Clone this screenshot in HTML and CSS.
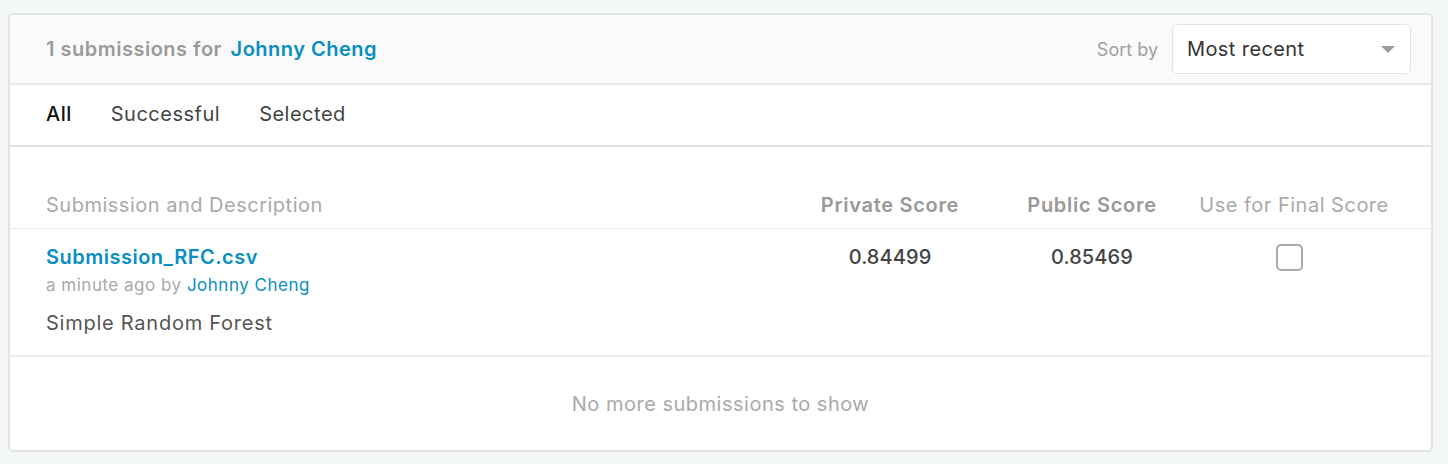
FILE: index.html
```html
<!DOCTYPE html>
<html>
<head>
<meta charset="utf-8">
<link rel="stylesheet" href="styles.css">
</head>
<body>
<div class="card">
  <div class="card-header">
    <div class="title"><span class="count">1 submissions for</span> <a class="user" href="#">Johnny Cheng</a></div>
    <div class="sort">
      <span class="sort-label">Sort by</span>
      <div class="select"><span>Most recent</span><span class="caret"></span></div>
    </div>
  </div>
  <div class="tabs">
    <span class="tab active">All</span>
    <span class="tab">Successful</span>
    <span class="tab">Selected</span>
  </div>
  <div class="table">
    <div class="thead">
      <div class="col-desc">Submission and Description</div>
      <div class="col-score strong">Private Score</div>
      <div class="col-score strong">Public Score</div>
      <div class="col-score">Use for Final Score</div>
    </div>
    <div class="row">
      <div class="col-desc">
        <a class="file" href="#">Submission_RFC.csv</a>
        <div class="meta">a minute ago by <a href="#">Johnny Cheng</a></div>
        <div class="desc">Simple Random Forest</div>
      </div>
      <div class="col-score value">0.84499</div>
      <div class="col-score value">0.85469</div>
      <div class="col-score value"><span class="checkbox"></span></div>
    </div>
  </div>
  <div class="footer">No more submissions to show</div>
</div>
</body>
</html>
```
FILE: styles.css
```css
html, body { margin: 0; }
body {
  background: #f4f7f8;
  font-family: Inter, "Liberation Sans", sans-serif;
  letter-spacing: 0.5px;
  padding: 13px 15px 0 8px;
}
a { text-decoration: none; color: #0a8ec2; }
.card {
  background: #fff;
  border: 2px solid #e3e4e5;
  border-radius: 5px;
  overflow: hidden;
}
.card-header {
  background: #fafafa;
  height: 70px;
  box-sizing: border-box;
  border-bottom: 2px solid #e8e8e8;
  display: flex;
  align-items: center;
  justify-content: space-between;
  padding: 0 20px 0 36px;
}
.title { font-size: 20px; font-weight: 600; }
.count { color: #9a9a9a; }
.user { color: #0a8ec2; margin-left: 3px; }
.sort { display: flex; align-items: center; gap: 14px; }
.sort-label { color: #a0a0a0; font-size: 18px; letter-spacing: 0; }
.select {
  width: 239px; height: 50px; box-sizing: border-box;
  border: 1px solid #e4e4e4; border-radius: 5px; background: #fff;
  display: flex; align-items: center; justify-content: space-between;
  padding: 0 15px 0 14px;
  font-size: 20px; color: #333; letter-spacing: 0.4px;
}
.caret {
  width: 0; height: 0;
  border-left: 7px solid transparent; border-right: 7px solid transparent;
  border-top: 7px solid #999;
}
.tabs {
  height: 62px; box-sizing: border-box;
  border-bottom: 2px solid #e2e2e2;
  display: flex; align-items: center; gap: 39px;
  padding: 0 36px 3px; font-size: 20px; color: #444;
}
.tab.active { color: #111; font-weight: 500; }
.thead, .row { display: flex; padding: 0 36px; }
.thead {
  padding-top: 46px; padding-bottom: 11px;
  border-bottom: 1px solid #ececec;
  font-size: 20px; color: #aaa; line-height: 24px;
}
.col-desc { flex: 1; }
.col-score { width: 202px; text-align: center; }
.thead .strong { font-weight: 600; color: #999; letter-spacing: 0.7px; }
.row {
  padding-top: 16px; height: 128px; box-sizing: border-box;
  border-bottom: 2px solid #ececec;
}
.file { font-size: 20px; font-weight: 600; line-height: 24px; display: block; }
.meta { font-size: 17px; color: #aaa; line-height: 24px; margin-top: 4px; }
.meta a { color: #0a8ec2; }
.desc { font-size: 20px; color: #555; line-height: 24px; margin-top: 14px; letter-spacing: 0.75px; }
.value { font-size: 20px; color: #444; line-height: 24px; font-weight: 500; letter-spacing: 0.1px; }
.checkbox {
  display: inline-block; width: 27px; height: 27px; box-sizing: border-box;
  border: 2px solid #aaa; border-radius: 5px; margin: -1px 10px 0 0; vertical-align: top;
}
.footer {
  height: 93px; display: flex; align-items: center; justify-content: center;
  font-size: 20px; color: #aaa;
}
```
